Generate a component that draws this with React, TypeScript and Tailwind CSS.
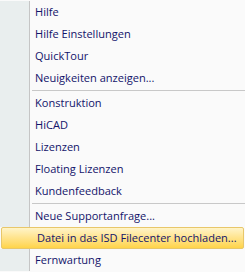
import React from 'react';

type Entry = { label: string; active?: boolean } | 'sep';

const entries: Entry[] = [
  { label: 'Hilfe' },
  { label: 'Hilfe Einstellungen' },
  { label: 'QuickTour' },
  { label: 'Neuigkeiten anzeigen...' },
  'sep',
  { label: 'Konstruktion' },
  { label: 'HiCAD' },
  { label: 'Lizenzen' },
  { label: 'Floating Lizenzen' },
  { label: 'Kundenfeedback' },
  'sep',
  { label: 'Neue Supportanfrage...' },
  { label: 'Datei in das ISD Filecenter hochladen...', active: true },
  { label: 'Fernwartung' },
];

export default function App() {
  return (
    <div
      className="w-[245px] h-[272px] overflow-hidden bg-[#fafafa] flex flex-col py-px text-[11.05px] text-[#13146a] whitespace-nowrap"
      style={{ fontFamily: '"Open Sans", "Noto Sans", sans-serif' }}
    >
      {entries.map((e, i) =>
        e === 'sep' ? (
          <div key={i} className="h-[3px] flex">
            <div className="w-[30px] bg-[#e9eeee] border-r border-[#c5c5c5]" />
            <div className="flex-1 pl-[2px] flex flex-col pt-px">
              <div className="h-px bg-[#c8c8c8]" />
            </div>
          </div>
        ) : e.active ? (
          <div
            key={i}
            className="h-[22px] mx-px flex items-center pl-[35px] rounded-[2px] border border-[#e8c76a] bg-gradient-to-b from-[#fff4c8] via-[#ffe38a] to-[#ffd447]"
          >
            <span className="leading-none">{e.label}</span>
          </div>
        ) : (
          <div key={i} className="h-[22px] flex">
            <div className="w-[30px] bg-[#e9eeee] border-r border-[#c5c5c5]" />
            <div className="flex-1 flex items-center pl-[5px]">
              <span className="leading-none">{e.label}</span>
            </div>
          </div>
        )
      )}
    </div>
  );
}
